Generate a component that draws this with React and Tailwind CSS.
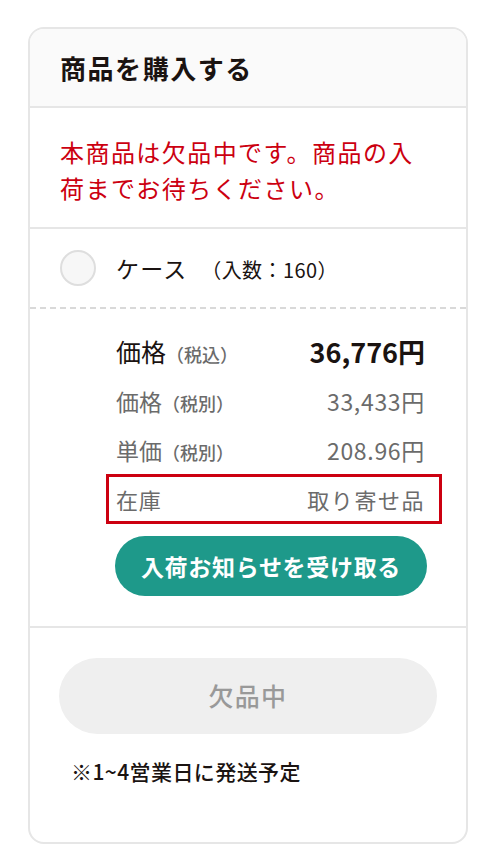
const PRICE_ROWS = [
  { label: '価格', note: '（税込）', value: '36,776円', main: true, h: 'h-[50px]' },
  { label: '価格', note: '（税別）', value: '33,433円', h: 'h-[49px]' },
  { label: '単価', note: '（税別）', value: '208.96円', h: 'h-[48px]' },
];

export default function App() {
  return (
    <div
      className="min-h-screen bg-white pt-[27px] px-[28px]"
      style={{ fontFamily: '"Noto Sans CJK JP", "Noto Sans", sans-serif' }}
    >
      <section className="overflow-hidden rounded-[16px] border-2 border-[#e6e6e6] bg-white">
        <div className="flex h-[79px] items-center border-b-2 border-[#e6e6e6] bg-[#fafafa] px-[30px]">
          <h2 className="text-[26px] font-bold tracking-[0.06em] text-[#1a1311]">商品を購入する</h2>
        </div>

        <div className="border-b-2 border-[#e6e6e6] px-[30px] pt-[26px] pb-[21px]">
          <p className="text-[24px] leading-[36px] tracking-[0.06em] text-[#cc0010]">
            本商品は欠品中です。商品の入荷までお待ちください。
          </p>
        </div>

        <div className="flex h-[80px] items-center gap-[20px] border-b-2 border-dashed border-[#d9d9d9] px-[30px]">
          <span className="h-[36px] w-[36px] shrink-0 rounded-full border-2 border-[#dedede] bg-[#f7f7f7]" />
          <p className="flex items-baseline text-[#1a1311]">
            <span className="text-[23px] tracking-[0.05em]">ケース</span>
            <span className="ml-[14px] text-[20px] tracking-[0.02em]">（入数：160）</span>
          </p>
        </div>

        <div className="border-b-2 border-[#e6e6e6] pl-[76px] pr-[24px] pt-[18px] pb-[30px]">
          {PRICE_ROWS.map((row) => (
            <div
              key={row.label + row.note}
              className={`flex items-center justify-between border-[3px] border-transparent pl-[7px] pr-[14px] ${row.h}`}
            >
              <span className={`flex items-baseline ${row.main ? 'text-[#1a1311]' : 'text-[#6b6b6b]'}`}>
                <span className={row.main ? 'text-[25px]' : 'text-[23px]'}>{row.label}</span>
                <span className="text-[18px] font-medium text-[#6b6b6b]">{row.note}</span>
              </span>
              <span
                className={
                  row.main
                    ? 'text-[27px] font-bold text-[#1a1311]'
                    : 'text-[23px] tracking-[0.03em] text-[#6b6b6b]'
                }
              >
                {row.value}
              </span>
            </div>
          ))}
          <div className="flex h-[50px] items-center justify-between border-[3px] border-[#cc0010] pl-[7px] pr-[14px] text-[22px] text-[#6b6b6b]">
            <span className="tracking-[0.03em]">在庫</span>
            <span className="tracking-[0.07em]">取り寄せ品</span>
          </div>
          <div className="mt-[12px] pl-[9px] pr-[15px]">
            <button
              type="button"
              className="flex h-[60px] w-full items-center justify-center rounded-full bg-[#1e998a] text-[23px] font-bold tracking-[0.03em] text-white"
            >
              入荷お知らせを受け取る
            </button>
          </div>
        </div>

        <div className="px-[29px] pt-[30px] pb-[54px]">
          <button
            type="button"
            disabled
            className="flex h-[76px] w-full items-center justify-center rounded-full bg-[#efefef] text-[25px] font-medium tracking-[0.05em] text-[#999999]"
          >
            欠品中
          </button>
          <p className="mt-[22px] pl-[12px] text-[21px] font-medium tracking-[0.02em] text-[#1a1311]">
            ※1~4営業日に発送予定
          </p>
        </div>
      </section>
    </div>
  );
}
